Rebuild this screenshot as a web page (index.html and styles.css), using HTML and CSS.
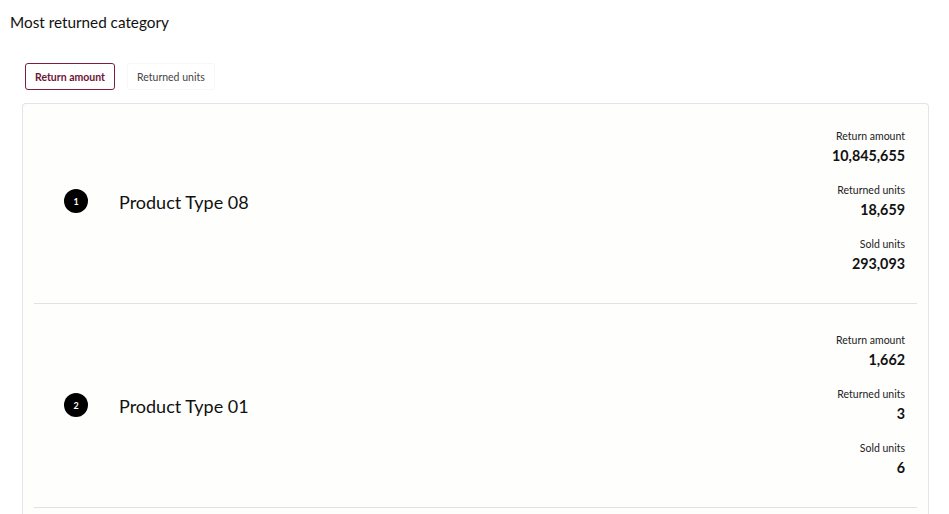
FILE: index.html
```html
<!DOCTYPE html>
<html lang="en">
<head>
    <meta charset="UTF-8">
    <meta name="viewport" content="width=device-width, initial-scale=1.0">
    <title>Most returned category</title>
    <link rel="stylesheet" href="styles.css">
</head>
<body>
    <h2 class="title">Most returned category</h2>

    <!-- Tabs -->
    <div class="tabs">
        <button class="tab active">Return amount</button>
        <button class="tab">Returned units</button>
    </div>

    <div class="card">
        <div class="row">
            <div class="rank">1</div>
            <div class="name">Product Type 08</div>
            <div class="stats">
                <div class="stat">
                    <div class="stat-label">Return amount</div>
                    <div class="stat-value">10,845,655</div>
                </div>
                <div class="stat">
                    <div class="stat-label">Returned units</div>
                    <div class="stat-value">18,659</div>
                </div>
                <div class="stat">
                    <div class="stat-label">Sold units</div>
                    <div class="stat-value">293,093</div>
                </div>
            </div>
        </div>

        <div class="row">
            <div class="rank">2</div>
            <div class="name">Product Type 01</div>
            <div class="stats">
                <div class="stat">
                    <div class="stat-label">Return amount</div>
                    <div class="stat-value">1,662</div>
                </div>
                <div class="stat">
                    <div class="stat-label">Returned units</div>
                    <div class="stat-value">3</div>
                </div>
                <div class="stat">
                    <div class="stat-label">Sold units</div>
                    <div class="stat-value">6</div>
                </div>
            </div>
        </div>
    </div>
</body>
</html>
```

FILE: styles.css
```css
body {
    margin: 0;
    padding: 0 20px 0 22px;
    font-family: Lato, "Noto Sans", sans-serif;
    color: #111;
    background: #fff;
}

.title {
    margin: 0 0 0 -12px;
    padding-top: 12px;
    font-size: 15.3px;
    font-weight: 400;
    line-height: 20px;
}

.tabs {
    display: flex;
    gap: 12px;
    margin: 31px 0 13px 3px;
}

.tab {
    height: 27px;
    padding: 0 9px;
    font-family: inherit;
    font-size: 10.5px;
    color: #444;
    background: #fff;
    border: 1px solid #f7f7f7;
    border-radius: 3px;
}

.tab.active {
    color: #6e1434;
    font-weight: 700;
    border-color: #7a1f3f;
}

.card {
    border: 1px solid #e4e4e4;
    border-bottom: none;
    border-radius: 4px 4px 0 0;
    background: #fefefd;
    padding: 0 11px 6px;
}

.row {
    display: flex;
    align-items: center;
    padding: 24px 12px 29px 30px;
    border-bottom: 1px solid #e2e2e2;
}

.row + .row {
    padding-top: 28px;
}

.rank {
    width: 24px;
    height: 24px;
    border-radius: 50%;
    background: #000;
    color: #fff;
    font-size: 9px;
    font-weight: 700;
    display: flex;
    align-items: center;
    justify-content: center;
    flex-shrink: 0;
}

.name {
    margin-left: 31px;
    padding-top: 2px;
    font-size: 18px;
    flex: 1;
}

.stats {
    text-align: right;
}

.stat + .stat {
    margin-top: 16px;
}

.stat-label {
    font-size: 10.5px;
    line-height: 16px;
    color: #222;
}

.stat-value {
    margin-top: 2px;
    font-size: 14.3px;
    line-height: 20px;
    font-weight: 700;
}
```
